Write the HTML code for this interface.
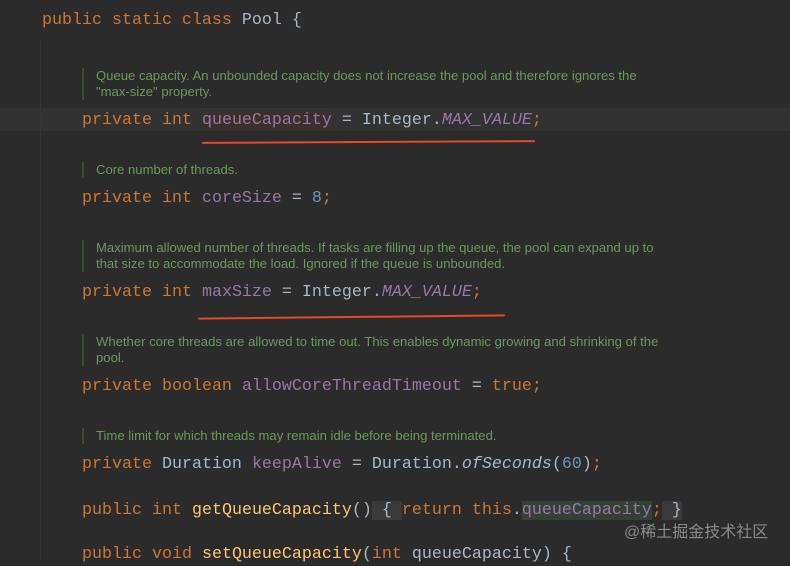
<!DOCTYPE html>
<html><head><style>
body{margin:0;width:790px;height:560px;background:#2b2b2b;overflow:hidden;position:relative;font-family:"Liberation Mono",monospace;}
.l{position:absolute;font-size:16.67px;line-height:22px;white-space:pre;color:#a9b7c6;}
.k{color:#cc7832}.f{color:#9876aa}.n{color:#6897bb}.m{color:#ffc66d}.i{font-style:italic}
.c{position:absolute;left:82px;border-left:2px solid #3d4a3a;padding-left:12px;font-family:"Liberation Sans",sans-serif;font-size:13.1px;line-height:16px;color:#6a9a5a;width:572px;}
.u{position:absolute;height:2px;background:#e8492a;border-radius:1px;}
</style></head><body>
<div style="position:absolute;left:0;top:108px;width:790px;height:23px;background:#323232"></div>
<div style="position:absolute;left:40px;top:40px;width:1px;height:520px;background:#353535"></div>
<div class="l" style="left:42px;top:10px"><span class="k">public static class</span> Pool {</div>
<div class="c" style="top:68px">Queue capacity. An unbounded capacity does not increase the pool and therefore ignores the <span style="white-space:nowrap">"max-size"</span> property.</div>
<div class="l" style="left:82px;top:110px"><span class="k">private int</span> <span class="f" style="background:#3b302a">queueCapacity</span> = Integer.<span class="f i">MAX_VALUE</span><span class="k">;</span></div>
<div class="u" style="left:202px;top:141px;width:333px;transform:rotate(-0.3deg)"></div>
<div class="c" style="top:162px">Core number of threads.</div>
<div class="l" style="left:82px;top:188px"><span class="k">private int</span> <span class="f">coreSize</span> = <span class="n">8</span><span class="k">;</span></div>
<div class="c" style="top:240px">Maximum allowed number of threads. If tasks are filling up the queue, the pool can expand up to that size to accommodate the load. Ignored if the queue is unbounded.</div>
<div class="l" style="left:82px;top:282px"><span class="k">private int</span> <span class="f">maxSize</span> = Integer.<span class="f i">MAX_VALUE</span><span class="k">;</span></div>
<div class="u" style="left:198px;top:316px;width:307px;transform:rotate(-0.6deg)"></div>
<div class="c" style="top:334px">Whether core threads are allowed to time out. This enables dynamic growing and shrinking of the pool.</div>
<div class="l" style="left:82px;top:376px"><span class="k">private boolean</span> <span class="f">allowCoreThreadTimeout</span> = <span class="k">true;</span></div>
<div class="c" style="top:428px">Time limit for which threads may remain idle before being terminated.</div>
<div class="l" style="left:82px;top:454px"><span class="k">private</span> Duration <span class="f">keepAlive</span> = Duration.<span class="i">ofSeconds</span>(<span class="n">60</span>)<span class="k">;</span></div>
<div class="l" style="left:82px;top:500px"><span class="k">public int</span> <span class="m">getQueueCapacity</span>()<span style="background:#3a3a3a"> { </span><span class="k">return this</span>.<span class="f" style="background:#344134">queueCapacity</span><span class="k">;</span><span style="background:#3a3a3a"> }</span></div>
<div class="l" style="left:82px;top:544px"><span class="k">public void</span> <span class="m">setQueueCapacity</span>(<span class="k">int</span> queueCapacity) {</div>
<div style="position:absolute;left:624px;top:518px;font-family:'Liberation Sans','Noto Sans CJK SC',sans-serif;font-size:16px;color:#8a8a8a">@稀土掘金技术社区</div>
</body></html>
